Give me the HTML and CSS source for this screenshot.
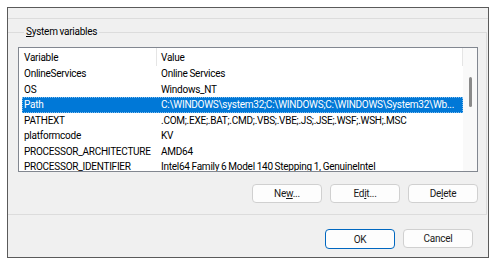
FILE: index.html
```html
<!DOCTYPE html>
<html lang="en">
<head>
    <meta charset="UTF-8">
    <title>Environment Variables</title>
    <link rel="stylesheet" href="styles.css">
</head>
<body>
    <div class="window">
        <div class="prev-group"></div>

        <fieldset class="group">
            <legend><u>S</u>ystem variables</legend>

            <div class="list">
                <div class="list-body">
                    <div class="list-head">
                        <span class="col-name">Variable</span>
                        <span class="col-value">Value</span>
                    </div>
                    <div class="row">
                        <span class="col-name">OnlineServices</span>
                        <span class="col-value">Online Services</span>
                    </div>
                    <div class="row">
                        <span class="col-name">OS</span>
                        <span class="col-value">Windows_NT</span>
                    </div>
                    <div class="row selected">
                        <span class="col-name">Path</span>
                        <span class="col-value">C:\WINDOWS\system32;C:\WINDOWS;C:\WINDOWS\System32\Wb...</span>
                    </div>
                    <div class="row">
                        <span class="col-name">PATHEXT</span>
                        <span class="col-value">.COM;.EXE;.BAT;.CMD;.VBS;.VBE;.JS;.JSE;.WSF;.WSH;.MSC</span>
                    </div>
                    <div class="row">
                        <span class="col-name">platformcode</span>
                        <span class="col-value">KV</span>
                    </div>
                    <div class="row">
                        <span class="col-name">PROCESSOR_ARCHITECTURE</span>
                        <span class="col-value">AMD64</span>
                    </div>
                    <div class="row">
                        <span class="col-name">PROCESSOR_IDENTIFIER</span>
                        <span class="col-value">Intel64 Family 6 Model 140 Stepping 1, GenuineIntel</span>
                    </div>
                </div>
                <div class="scrollbar">
                    <div class="thumb"></div>
                </div>
            </div>

            <div class="actions">
                <button class="btn">Ne<u>w</u>...</button>
                <button class="btn">Ed<u>i</u>t...</button>
                <button class="btn">De<u>l</u>ete</button>
            </div>
        </fieldset>

        <div class="footer">
            <button class="btn btn-default">OK</button>
            <button class="btn">Cancel</button>
        </div>
    </div>
</body>
</html>
```

FILE: styles.css
```css
:root {
    --face: #f0f0f0;
    --frame: #5a5a5a;
    --line: #dcdcdc;
    --list-border: #828790;
    --select: #0078d7;
    --text: #000000;
}

* {
    margin: 0;
    padding: 0;
    box-sizing: border-box;
}

body {
    background: #ffffff;
    font-family: Roboto, 'Noto Sans', sans-serif;
    font-size: 10px;
    letter-spacing: -0.25px;
    word-spacing: -0.4px;
    color: var(--text);
    padding: 7px 0 0 7px;
}

.window {
    width: 482px;
    height: 251px;
    background: var(--face);
    border: 1px solid var(--frame);
    display: flex;
    flex-direction: column;
}

.prev-group {
    height: 11px;
    border-bottom: 1px solid var(--line);
}

.group {
    margin-top: 5px;
    border: 1px solid var(--line);
    border-left: none;
    margin-right: 1px;
    padding: 7px 8px 11px 10px;
    min-width: 0;
}

.group legend {
    margin-left: 6px;
    padding: 0 2px;
    line-height: 16px;
}

.list {
    height: 125px;
    background: #ffffff;
    border: 1px solid var(--list-border);
    display: flex;
}

.list-body {
    flex: 1;
    min-width: 0;
    overflow: hidden;
}

.list-head {
    height: 18px;
    display: flex;
    align-items: center;
    border-right: 1px solid #e5e5e5;
}

.list-head .col-name {
    border-right: 1px solid #e5e5e5;
    align-self: stretch;
    display: flex;
    align-items: center;
}

.col-name {
    width: 138px;
    padding-left: 5px;
    flex-shrink: 0;
    white-space: nowrap;
    overflow: hidden;
}

.col-value {
    flex: 1;
    min-width: 0;
    padding-left: 4px;
    padding-right: 2px;
    white-space: nowrap;
    overflow: hidden;
}

.row {
    height: 15.5px;
    margin-left: 3px;
    display: flex;
    align-items: center;
}

.row .col-name {
    width: 135px;
    padding-left: 2px;
}

.row.selected {
    background: var(--select);
    color: #ffffff;
    outline: 1px dotted #7fbcec;
    outline-offset: -1px;
}

.scrollbar {
    width: 14px;
    flex-shrink: 0;
    background: #f9f9f9;
    display: flex;
    justify-content: center;
    padding-top: 29px;
}

.thumb {
    width: 3px;
    height: 30px;
    border-radius: 2px;
    background: #8a8a8a;
}

.actions {
    margin-top: 12px;
    display: flex;
    justify-content: flex-end;
    gap: 8px;
}

.btn {
    width: 70px;
    height: 19px;
    background: #fdfdfd;
    border: 1px solid #d0d0d0;
    border-radius: 4px;
    font-family: inherit;
    font-size: 10px;
    letter-spacing: inherit;
    color: #1a1a1a;
}

.footer {
    margin-top: 14px;
    padding-right: 15px;
    display: flex;
    justify-content: flex-end;
    gap: 8px;
}

.btn-default {
    height: 20px;
    border-color: #0067c0;
}
```
